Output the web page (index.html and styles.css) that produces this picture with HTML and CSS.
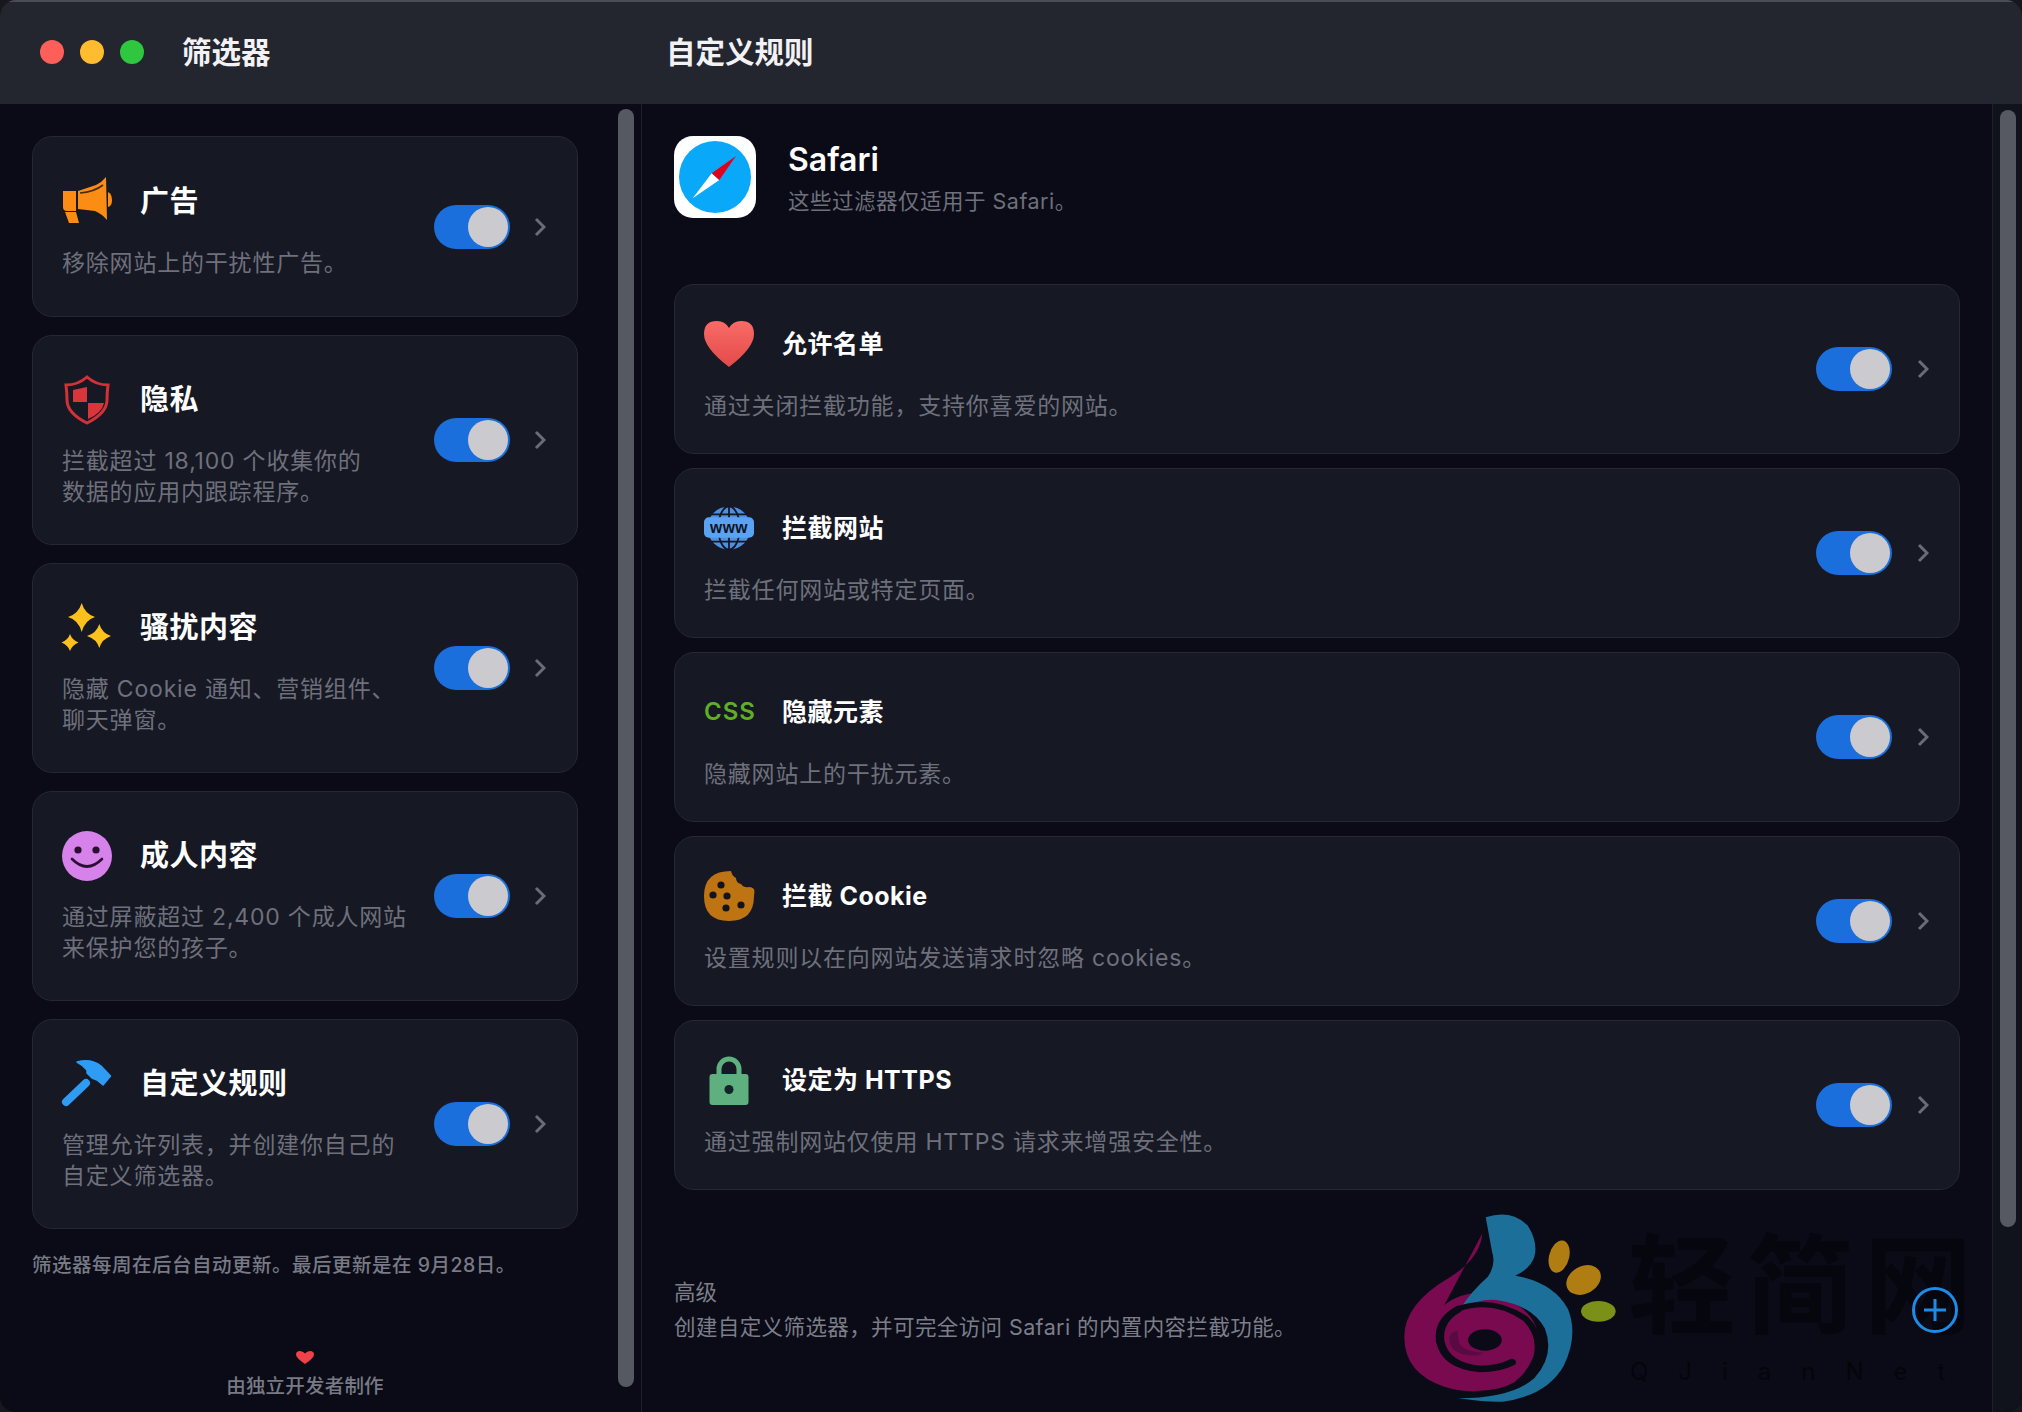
FILE: index.html
```html
<!DOCTYPE html>
<html lang="zh-CN">
<head>
<meta charset="utf-8">
<title>筛选器</title>
<link rel="stylesheet" href="styles.css">
</head>
<body>
<div class="window">
  <header class="titlebar">
    <div class="titlebar-left">
      <div class="lights"><span class="light red"></span><span class="light yellow"></span><span class="light green"></span></div>
      <h1 class="window-title">筛选器</h1>
    </div>
    <h2 class="window-title">自定义规则</h2>
  </header>
  <div class="panes">
    <aside class="sidebar">
      <div class="sidebar-content">
        <div class="side-list">
          <section class="card side-card">
            <div class="side-text">
              <div class="head">
                <svg class="icon" viewBox="0 0 50 46" preserveAspectRatio="xMidYMin"><path fill="#fb8c14" d="M1 14h13v20H5q-4 0-4-4z"/><path fill="#fb8c14" d="M3 35h11l3 11H7z"/><path fill="#fb8c14" d="M16 14 34 8q6-3 10-8l1 43q-5-6-12-9l-17-2z"/><path fill="#fb8c14" d="M46 15q4 2 4 8t-4 7z"/><path fill="none" stroke="#4a2a0a" stroke-width="1.6" d="M18 16q14-1 23-8"/></svg>
                <h3 class="side-title">广告</h3>
              </div>
              <p class="desc">移除网站上的干扰性广告。</p>
            </div>
            <span class="toggle"><span class="knob"></span></span>
            <svg class="chev" viewBox="0 0 12 20"><path d="M2 2l8 8-8 8"/></svg>
          </section>
          <section class="card side-card">
            <div class="side-text">
              <div class="head">
                <svg class="icon" viewBox="0 0 50 50"><path fill="none" stroke="#d23237" stroke-width="3" d="M25 2q9 8 21 8-1 8-1 15 0 13-20 23Q5 38 5 25q0-7-1-15 12 0 21-8z"/><path fill="#d9363b" d="M11 15 25 12v15H11z"/><path fill="#d9363b" d="M26 28h16q-2 10-16 16z"/></svg>
                <h3 class="side-title">隐私</h3>
              </div>
              <p class="desc">拦截超过 18,100 个收集你的<br>数据的应用内跟踪程序。</p>
            </div>
            <span class="toggle"><span class="knob"></span></span>
            <svg class="chev" viewBox="0 0 12 20"><path d="M2 2l8 8-8 8"/></svg>
          </section>
          <section class="card side-card">
            <div class="side-text">
              <div class="head">
                <svg class="icon" viewBox="0 0 50 50"><path fill="#fcc11c" d="M19.700 0Q23 11 33 14 23 17 19.700 29 16.400 17 6 14 16.400 11 19.700 0z"/><path fill="#fcc11c" d="M37.300 21Q40 30 49 33 40 36 37.300 45 34.600 36 25 33 34.600 30 37.300 21z"/><path fill="#fcc11c" d="M8 31Q10 37 16.500 39.500 10 42 8 48 6 42 -.5 39.500 6 37 8 31z"/></svg>
                <h3 class="side-title">骚扰内容</h3>
              </div>
              <p class="desc">隐藏 Cookie 通知、营销组件、<br>聊天弹窗。</p>
            </div>
            <span class="toggle"><span class="knob"></span></span>
            <svg class="chev" viewBox="0 0 12 20"><path d="M2 2l8 8-8 8"/></svg>
          </section>
          <section class="card side-card">
            <div class="side-text">
              <div class="head">
                <svg class="icon" viewBox="0 0 50 50"><circle cx="25" cy="25" r="25" fill="#d781ea"/><circle cx="16" cy="19" r="3.6" fill="#2a1030"/><circle cx="34" cy="19" r="3.6" fill="#2a1030"/><path fill="none" stroke="#2a1030" stroke-width="2.6" stroke-linecap="round" d="M10 28q15 15 30 0"/></svg>
                <h3 class="side-title">成人内容</h3>
              </div>
              <p class="desc">通过屏蔽超过 2,400 个成人网站<br>来保护您的孩子。</p>
            </div>
            <span class="toggle"><span class="knob"></span></span>
            <svg class="chev" viewBox="0 0 12 20"><path d="M2 2l8 8-8 8"/></svg>
          </section>
          <section class="card side-card">
            <div class="side-text">
              <div class="head">
                <svg class="icon hammer" viewBox="0 0 50 50"><path fill="none" stroke="#2f9cf4" stroke-width="8" stroke-linecap="round" d="M4 43 24 24"/><path fill="#2f9cf4" stroke="#2f9cf4" stroke-width="1.500" stroke-linejoin="round" d="M15 3Q29-1 39 7L48.500 17 41 26 35 21 30 19 25 14V11Q21 6 15 3z"/></svg>
                <h3 class="side-title">自定义规则</h3>
              </div>
              <p class="desc">管理允许列表，并创建你自己的<br>自定义筛选器。</p>
            </div>
            <span class="toggle"><span class="knob"></span></span>
            <svg class="chev" viewBox="0 0 12 20"><path d="M2 2l8 8-8 8"/></svg>
          </section>
        </div>
        <p class="update-note">筛选器每周在后台自动更新。最后更新是在 9月28日。</p>
        <div class="credit">
          <svg class="credit-heart" viewBox="0 0 18 13"><path d="M9 13Q0 7 0 3.5 0 0 4 0q3 0 5 2.500Q11 0 14 0q4 0 4 3.500Q18 7 9 13z"/></svg>
          <span>由独立开发者制作</span>
        </div>
      </div>
      <div class="thumb side-thumb"></div>
    </aside>
    <main class="main">
      <div class="main-content">
        <div class="app-head">
          <svg class="safari" viewBox="0 0 82 82"><rect width="82" height="82" rx="19" fill="#fff"/><circle cx="41" cy="41" r="36" fill="#0aa8f8"/><path fill="#fff" d="M37.700 37.300 18.700 62.300 45.300 44z"/><path fill="#e3001b" d="M62 20 37.700 37.300 45.300 44z"/></svg>
          <div class="app-text">
            <div class="app-name">Safari</div>
            <div class="app-sub">这些过滤器仅适用于 Safari。</div>
          </div>
        </div>
        <div class="rule-list">
          <section class="card rule-card">
            <div class="rule-text">
              <div class="head">
                <svg class="icon rule-icon" viewBox="0 0 50 46"><defs><linearGradient id="hg" x1="0" y1="0" x2="0" y2="1"><stop offset="0" stop-color="#f96b67"/><stop offset="1" stop-color="#e24a48"/></linearGradient></defs><path fill="url(#hg)" d="M25 46Q0 27 0 13 0 0 13 0q8 0 12 7 4-7 12-7 13 0 13 13 0 14-25 33z"/></svg>
                <h3 class="rule-title">允许名单</h3>
              </div>
              <p class="desc">通过关闭拦截功能，支持你喜爱的网站。</p>
            </div>
            <span class="toggle"><span class="knob"></span></span>
            <svg class="chev" viewBox="0 0 12 20"><path d="M2 2l8 8-8 8"/></svg>
          </section>
          <section class="card rule-card">
            <div class="rule-text">
              <div class="head">
                <svg class="icon rule-icon" viewBox="0 0 51 46"><circle cx="25.500" cy="23" r="22" fill="#4d8fe0"/><g fill="none" stroke="#141622" stroke-width="1.800"><ellipse cx="25.500" cy="23" rx="11" ry="22"/><path d="M25.500 1v44M7 9h37M7 37h37"/></g><rect y="12" width="51" height="21" rx="5" fill="#5aa2f2"/><text class="www" x="25.500" y="28" text-anchor="middle">www</text></svg>
                <h3 class="rule-title">拦截网站</h3>
              </div>
              <p class="desc">拦截任何网站或特定页面。</p>
            </div>
            <span class="toggle"><span class="knob"></span></span>
            <svg class="chev" viewBox="0 0 12 20"><path d="M2 2l8 8-8 8"/></svg>
          </section>
          <section class="card rule-card">
            <div class="rule-text">
              <div class="head">
                <span class="icon rule-icon css-badge">CSS</span>
                <h3 class="rule-title">隐藏元素</h3>
              </div>
              <p class="desc">隐藏网站上的干扰元素。</p>
            </div>
            <span class="toggle"><span class="knob"></span></span>
            <svg class="chev" viewBox="0 0 12 20"><path d="M2 2l8 8-8 8"/></svg>
          </section>
          <section class="card rule-card">
            <div class="rule-text">
              <div class="head">
                <svg class="icon rule-icon" viewBox="0 0 50 50"><path fill="#bf7413" d="M27 0q1 5 5 7 0 5 5 6 3 4 8 3 3 0 5 2 1 3 0 7 0 25-25 25T0 25 27 0z"/><g fill="#14131a"><circle cx="17" cy="14" r="3.600"/><circle cx="9" cy="24" r="3.600"/><circle cx="23" cy="25" r="3.600"/><circle cx="22" cy="37" r="3.600"/><circle cx="37" cy="34" r="3.600"/></g></svg>
                <h3 class="rule-title">拦截 Cookie</h3>
              </div>
              <p class="desc">设置规则以在向网站发送请求时忽略 cookies。</p>
            </div>
            <span class="toggle"><span class="knob"></span></span>
            <svg class="chev" viewBox="0 0 12 20"><path d="M2 2l8 8-8 8"/></svg>
          </section>
          <section class="card rule-card">
            <div class="rule-text">
              <div class="head">
                <svg class="icon rule-icon" viewBox="0 0 50 50"><path fill="none" stroke="#5fb07f" stroke-width="5" d="M15 22v-8a10 10 0 0 1 20 0v8"/><rect x="5.500" y="19" width="39" height="31" rx="3" fill="#5fb07f"/><circle cx="25" cy="34.500" r="4.500" fill="#14222a"/></svg>
                <h3 class="rule-title">设定为 HTTPS</h3>
              </div>
              <p class="desc">通过强制网站仅使用 HTTPS 请求来增强安全性。</p>
            </div>
            <span class="toggle"><span class="knob"></span></span>
            <svg class="chev" viewBox="0 0 12 20"><path d="M2 2l8 8-8 8"/></svg>
          </section>
        </div>
        <div class="advanced">
          <div class="advanced-label">高级</div>
          <div class="advanced-desc">创建自定义筛选器，并可完全访问 Safari 的内置内容拦截功能。</div>
        </div>
      </div>
      <div class="gutter"><div class="thumb main-thumb"></div></div>
      <div class="watermark">
        <svg class="wm-logo" viewBox="0 0 640 696" preserveAspectRatio="none">
          <path fill="#7a0a4f" d="M290 160Q285 235 215 290 105 370 105 470q0 110 95 150 60 25 130 5 85-30 95-130 0-110-105-150-70-20-120 30Z"/>
          <path fill="#1c6f98" d="M298 112q60-25 100 25 25 50 15 95-10 35-45 55 90 20 125 100 25 80-10 170-40 90-145 108-30 3-105-10 125 0 180-60 50-70 25-150-30-70-115-85-40-5-85 25 25-50 65-95 20-35 10-75Z"/>
          <path fill="none" stroke="#0a0b16" stroke-width="20" stroke-linecap="round" d="M232 388q-48 35-42 95 12 75 95 84 45 0 75-20"/>
          <path fill="none" stroke="#0a0b16" stroke-width="16" d="M232 386q85-35 160 30 40 50 27 115-15 50-45 78"/>
          <ellipse cx="296" cy="480" rx="40" ry="32" fill="#0a0b16"/>
          <path fill="#5a0a42" d="M212 470q-4 50 50 56 20 2 30-8-40 0-55-25-5-15-5-40-16 0-20 17z"/>
          <ellipse cx="472" cy="230" rx="24" ry="49" fill="#b07d12" transform="rotate(10 472 230)"/>
          <ellipse cx="530" cy="300" rx="37" ry="48" fill="#b07d12" transform="rotate(35 530 300)"/>
          <ellipse cx="565" cy="394" rx="41" ry="31" fill="#7a9018"/>
        </svg>
        <div class="wm-name">轻简网</div>
        <div class="wm-domain">QJianNet</div>
      </div>
      <svg class="add-btn" viewBox="0 0 48 48"><circle cx="24" cy="24" r="21.500"/><path d="M24 13v22M13 24h22"/></svg>
    </main>
  </div>
</div>
</body>
</html>
```
FILE: styles.css
```css
* { box-sizing: border-box; }
html, body { margin: 0; padding: 0; }
body {
  width: 2022px;
  height: 1412px;
  overflow: hidden;
  background: #17181e;
  font-family: Inter, "Noto Sans CJK SC", sans-serif;
  color: #fff;
}
h1, h2, h3, p { margin: 0; }

.window {
  width: 2022px;
  height: 1412px;
  display: flex;
  flex-direction: column;
  border-radius: 16px;
  overflow: hidden;
  background: #0a0b16;
}

.titlebar {
  height: 104px;
  flex: none;
  display: flex;
  align-items: center;
  padding-bottom: 2px;
  background: #23252f;
  border-top: 2px solid #4b4c55;
}
.titlebar-left {
  width: 666px;
  display: flex;
  align-items: center;
  padding-left: 40px;
}
.lights { display: flex; gap: 16px; }
.light { width: 24px; height: 24px; border-radius: 50%; }
.red { background: #fe5f58; }
.yellow { background: #febc2e; }
.green { background: #2ec73f; }
.window-title {
  font-size: 29.500px;
  line-height: 40px;
  font-weight: 700;
  color: #f2f2f4;
}
.titlebar-left .window-title { margin-left: 38px; }

.panes { flex: 1; display: flex; min-height: 0; }

.sidebar {
  width: 642px;
  flex: none;
  display: flex;
  border-right: 1px solid #1d1f2a;
  background: #0a0b16;
}
.sidebar-content {
  width: 618px;
  flex: none;
  display: flex;
  flex-direction: column;
  padding: 32px 0 12px 32px;
}
.side-list { width: 546px; display: flex; flex-direction: column; gap: 18px; }

.card {
  display: flex;
  align-items: center;
  background: #161824;
  border: 1.500px solid #252733;
  border-radius: 20px;
}
.side-card { padding: 38px 0 35px 29px; min-height: 181px; }
.side-card:nth-child(n+2) { min-height: 210px; }
.side-card .toggle, .side-card .chev { margin-top: -3px; }
.side-card .chev { margin-left: 24px; }
.side-text { width: 372px; flex: none; }
.head { display: flex; align-items: center; height: 50px; }
.icon { width: 50px; height: 50px; flex: none; overflow: visible; }
.side-title {
  margin-left: 28px;
  font-size: 29px;
  line-height: 40px;
  letter-spacing: .5px;
  font-weight: 700;
  color: #fff;
}
.desc {
  margin-top: 21px;
  font-size: 23px;
  line-height: 31px;
  letter-spacing: .8px;
  color: #6e707b;
  white-space: nowrap;
}
.toggle {
  width: 76px;
  height: 44px;
  flex: none;
  display: flex;
  justify-content: flex-end;
  align-items: center;
  padding-right: 2px;
  border-radius: 22px;
  background: #1a6fdc;
}
.knob { width: 40px; height: 40px; border-radius: 50%; background: #cbcbcf; }
.chev {
  width: 12px;
  height: 20px;
  flex: none;
  margin-left: 25px;
  fill: none;
  stroke: #6a6c76;
  stroke-width: 3;
}

.update-note {
  margin-top: 24px;
  font-size: 19.500px;
  line-height: 24px;
  letter-spacing: .5px;
  font-weight: 500;
  color: #787a85;
  white-space: nowrap;
}
.credit {
  margin-top: auto;
  width: 546px;
  display: flex;
  flex-direction: column;
  align-items: center;
  gap: 8px;
  font-size: 19.500px;
  line-height: 28px;
  letter-spacing: .2px;
  font-weight: 500;
  color: #787a85;
}
.credit-heart { width: 18px; height: 13px; fill: #f04048; }

.thumb { width: 16px; border-radius: 8px; background: #565862; }
.side-thumb { height: 1278px; margin-top: 5px; }

.main { flex: 1; display: flex; position: relative; min-width: 0; }
.main-content { width: 1350px; flex: none; padding: 32px 32px 0 32px; }
.app-head { display: flex; align-items: flex-start; height: 82px; }
.safari { width: 82px; height: 82px; flex: none; }
.app-text { margin-left: 32px; padding-top: 3px; }
.app-name { font-size: 32px; line-height: 42px; font-weight: 600; color: #fff; }
.app-sub {
  margin-top: 4px;
  font-size: 21.500px;
  line-height: 32px;
  letter-spacing: .5px;
  color: #6e707b;
  white-space: nowrap;
}

.rule-list { margin-top: 66px; display: flex; flex-direction: column; gap: 14px; }
.rule-card { height: 170px; padding: 0 30px 0 29px; }
.rule-text { flex: 1; margin-top: 3px; }
.rule-icon { display: block; }
.rule-title {
  margin-left: 28px;
  font-size: 25px;
  line-height: 40px;
  letter-spacing: .5px;
  font-weight: 700;
  color: #fff;
}
.rule-card .desc { margin-top: 21.500px; }
.css-badge {
  height: auto;
  font-size: 24px;
  line-height: 30px;
  font-weight: 600;
  letter-spacing: 1px;
  color: #5fae25;
  white-space: nowrap;
}
.www { font: 800 16px "Liberation Sans", sans-serif; letter-spacing: .5px; fill: #10131f; }

.advanced { margin-top: 87px; color: #7c7e89; }
.advanced-label { font-size: 21.500px; line-height: 30px; }
.advanced-desc { margin-top: 5px; font-size: 21.500px; line-height: 30px; letter-spacing: .4px; white-space: nowrap; }

.gutter {
  width: 30px;
  flex: none;
  height: 100%;
  padding: 6px 0 0 7px;
  background: #10121c;
  border-left: 1px solid #1d1f2a;
}
.main-thumb { height: 1117px; }

.watermark { position: absolute; left: 718px; top: 0; width: 630px; height: 100%; pointer-events: none; }
.wm-logo { position: absolute; left: 0; top: 1076px; width: 270px; height: 232px; }
.wm-name {
  position: absolute;
  left: 268px;
  top: 1114px;
  font: 700 108px/120px "Noto Sans CJK SC", sans-serif;
  letter-spacing: 10px;
  color: #05060e;
  white-space: nowrap;
}
.wm-domain {
  position: absolute;
  left: 270px;
  top: 1253px;
  font: 400 24px/29px Inter, sans-serif;
  letter-spacing: 30px;
  color: #04050c;
  white-space: nowrap;
}
.add-btn {
  position: absolute;
  left: 1269px;
  top: 1182px;
  width: 48px;
  height: 48px;
  fill: none;
  stroke: #1c8ce8;
  stroke-width: 3;
}
```
